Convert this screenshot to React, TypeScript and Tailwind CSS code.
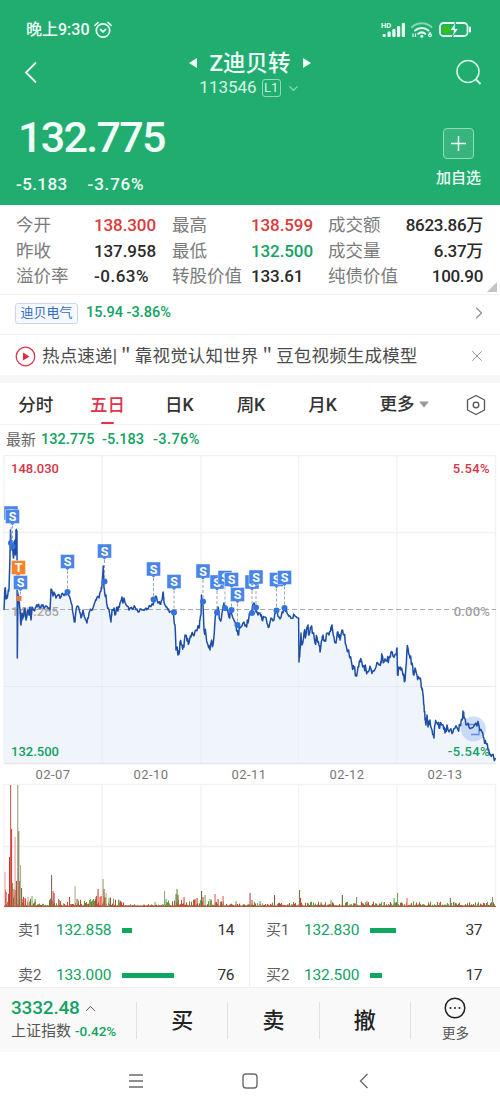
import { ChevronDown, ChevronRight, ChevronUp, X } from 'lucide-react'
import { clsx } from 'clsx'

type Tone = 'up' | 'down' | 'flat'

interface Stat {
  label: string
  value: string
  tone: Tone
}

interface Marker {
  x: number
  flagY: number
  dotY: number
  kind?: 'S' | 'T'
}

const stats: Stat[][] = [
  [
    { label: '今开', value: '138.300', tone: 'up' },
    { label: '最高', value: '138.599', tone: 'up' },
    { label: '成交额', value: '8623.86万', tone: 'flat' },
  ],
  [
    { label: '昨收', value: '137.958', tone: 'flat' },
    { label: '最低', value: '132.500', tone: 'down' },
    { label: '成交量', value: '6.37万', tone: 'flat' },
  ],
  [
    { label: '溢价率', value: '-0.63%', tone: 'flat' },
    { label: '转股价值', value: '133.61', tone: 'flat' },
    { label: '纯债价值', value: '100.90', tone: 'flat' },
  ],
]

const tabs = ['分时', '五日', '日K', '周K', '月K']
const dates = ['02-07', '02-10', '02-11', '02-12', '02-13']

const asks = [
  { label: '卖1', price: '132.858', bar: 10, qty: '14' },
  { label: '卖2', price: '133.000', bar: 52, qty: '76' },
]
const bids = [
  { label: '买1', price: '132.830', bar: 26, qty: '37' },
  { label: '买2', price: '132.500', bar: 12, qty: '17' },
]

// x, y pairs of the price line, y measured from the top of the chart
const pricePoints: [number, number][] = [
  [4, 155], [5, 133], [6, 144], [8, 138], [9, 134], [10, 100], [10.5, 75], [12, 95], [12.5, 88], [13.5, 103],
  [15, 85], [15.5, 100], [16, 75], [17, 76], [17.3, 203], [18, 140], [19, 148], [20, 155], [21, 170], [22, 158],
  [23, 162], [25, 153], [26, 165], [28, 155], [29, 160], [30, 152], [31, 165], [32, 152], [34, 155], [36, 152],
  [38, 150], [40, 153], [42, 151], [45, 152], [48, 153], [50, 155], [51, 134], [53, 141], [54, 137], [56, 143],
  [58, 140], [61, 142], [63, 139], [66, 140], [68, 137], [70, 143], [72, 150], [74, 165], [75, 167], [76, 155],
  [78, 151], [80, 158], [81, 163], [83, 155], [85, 163], [87, 168], [89, 158], [91, 155], [93, 153], [95, 147],
  [97, 142], [99, 143], [101, 136], [102, 130], [103.3, 111], [104, 133], [105, 140], [106, 140], [107, 150],
  [109, 155], [111, 167], [112, 155], [114, 153], [115, 160], [117, 152], [118, 156], [120, 148], [122, 142],
  [123, 148], [124, 143], [127, 151], [129, 155], [131, 153], [133, 154], [135, 152], [138, 157], [140, 154],
  [143, 155], [146, 153], [148, 154], [150, 151], [153, 150], [154, 147], [156, 141], [158, 148], [160, 149],
  [162, 145], [163, 137], [164, 147], [166, 152], [168, 155], [170, 157], [173, 157], [175, 170], [176, 195],
  [177, 192], [178, 200], [179, 199], [180, 187], [182, 190], [184, 192], [185, 180], [187, 186], [189, 188],
  [191, 182], [193, 180], [196, 175], [199, 173], [200, 165], [201, 160], [201.5, 140], [203, 150], [204, 175],
  [206, 180], [208, 190], [210, 195], [211, 188], [213, 190], [215, 165], [216, 158], [218, 152], [220, 165],
  [222, 158], [224, 148], [226, 155], [229, 162], [231, 155], [233, 163], [236, 170], [238, 180], [240, 173],
  [243, 168], [246, 170], [248, 168], [250, 158], [252, 155], [254, 148], [256, 157], [258, 160], [260, 158],
  [262, 165], [264, 162], [267, 168], [269, 172], [271, 163], [274, 165], [276, 155], [279, 162], [282, 157],
  [285, 155], [287, 158], [290, 161], [293, 163], [295, 161], [298.6, 163], [299, 207], [300, 195], [301, 178],
  [302, 190], [304, 178], [306, 180], [308, 170], [309, 180], [311, 172], [313, 178], [315, 188], [317, 182],
  [319, 190], [320, 197], [322, 185], [323, 180], [325, 185], [327, 178], [329, 180], [331, 172], [332, 170],
  [334, 182], [336, 188], [338, 177], [340, 185], [342, 175], [344, 180], [346, 190], [348, 195], [350, 203],
  [352, 210], [354, 213], [356, 220], [358, 212], [360, 207], [362, 208], [364, 211], [366, 214], [368, 217],
  [371, 214], [374, 216], [376, 212], [379, 210], [381, 206], [382, 200], [384, 207], [387, 206], [389, 203],
  [391, 197], [393, 201], [396, 199], [397, 193], [397.5, 220], [399, 213], [401, 215], [403, 220], [405, 226],
  [407, 195], [408, 193], [410, 203], [412, 208], [414, 220], [415, 213], [417, 220], [419, 223], [421, 228],
  [422, 235], [423, 240], [424, 250], [425, 265], [426, 270], [427, 260], [428, 272], [430, 265], [432, 275],
  [434, 283], [435, 270], [437, 268], [439, 273], [441, 268], [443, 270], [445, 278], [447, 270], [450, 275],
  [453, 277], [455, 273], [458, 275], [460, 270], [462, 265], [463, 256], [464, 263], [466, 270], [469, 272],
  [472, 273], [476, 268], [479, 271], [482, 277], [484, 284], [486, 288], [488, 295], [490, 300], [492, 300],
  [495.5, 303],
]

const markers: Marker[] = [
  { x: 11, flagY: 58, dotY: 88 },
  { x: 12.5, flagY: 61.5, dotY: 91.5 },
  { x: 18.5, flagY: 112.5, dotY: 143, kind: 'T' },
  { x: 20.5, flagY: 127.5, dotY: 143 },
  { x: 67.5, flagY: 106.5, dotY: 137 },
  { x: 104.5, flagY: 96, dotY: 126.5 },
  { x: 153.5, flagY: 114, dotY: 144.5 },
  { x: 174, flagY: 126.5, dotY: 157.5 },
  { x: 203, flagY: 116, dotY: 146.5 },
  { x: 217, flagY: 127, dotY: 157.5 },
  { x: 225, flagY: 122.5, dotY: 153 },
  { x: 231.5, flagY: 124.5, dotY: 155 },
  { x: 237.5, flagY: 139.5, dotY: 170 },
  { x: 252, flagY: 127, dotY: 158 },
  { x: 256, flagY: 122, dotY: 152.5 },
  { x: 276.5, flagY: 124.5, dotY: 155.5 },
  { x: 284.5, flagY: 122.5, dotY: 153 },
]

// [x, height, colour] of the bars that stand out above the noise
const volumeSpikes: [number, number, string][] = [
  [5, 35, '#f3a0a0'], [6, 15, '#d8403a'], [9.5, 50, '#c2362f'], [10.5, 122, '#e0605a'], [11.5, 78, '#d8403a'],
  [12.5, 24, '#7d9a3c'], [14, 18, '#d8403a'], [15, 70, '#e99a98'], [16.5, 26, '#b5523a'], [17.7, 122, '#93a083'],
  [18.7, 76, '#8b7a4a'], [19.7, 26, '#c2483a'], [20.5, 42, '#a9b48c'], [21.5, 19, '#7d7a3c'], [23, 8, '#d8403a'],
  [25, 9, '#d8403a'], [28, 10, '#e99a98'], [32, 11, '#7fb069'], [35, 8, '#6fa552'], [51.5, 32, '#8a6a5a'],
  [53, 16, '#e0605a'], [54, 14, '#c2362f'], [59, 7, '#d8403a'], [69.5, 10, '#d8403a'], [75, 21, '#9ab48a'],
  [77, 8, '#d8403a'], [96, 10, '#c2483a'], [98, 18, '#c2483a'], [100, 10, '#ff3b30'], [101, 11, '#ff3b30'],
  [103, 28, '#9aa86a'], [104, 18, '#c2483a'], [106, 14, '#8fbf7a'], [109, 9, '#6fa552'], [119, 7, '#6fa552'],
  [155, 5, '#6fa552'], [164.5, 16, '#8fa87a'], [166, 8, '#6fa552'], [176, 13, '#4b8f2e'], [177, 18, '#4b8f2e'],
  [178, 12, '#d8403a'], [184, 10, '#d8403a'], [195, 8, '#d8403a'], [197, 9, '#c2483a'], [201.5, 16, '#5d6f3a'],
  [203, 10, '#d8403a'], [205, 12, '#6fa552'], [210, 8, '#6fa552'], [215, 13, '#e0605a'], [218, 8, '#d8403a'],
  [223, 11, '#e0605a'], [236, 6, '#6fa552'], [250, 14, '#b5523a'], [252, 7, '#d8403a'], [260, 6, '#6fa552'],
  [274.5, 12, '#7d5a4a'], [299.5, 17, '#7d7a3c'], [300.5, 9, '#d8403a'], [321, 5, '#6fa552'], [331, 7, '#6fa552'],
  [342.3, 12, '#4b6f2e'], [356.5, 10, '#7d9a6c'], [367, 6, '#e0605a'], [384, 5, '#6fa552'], [394, 9, '#6fa552'],
  [397.5, 14, '#6fa552'], [407, 9, '#ff6a5a'], [450.3, 9, '#8a6a5a'], [454, 5, '#6fa552'], [492.5, 10, '#7d9a6c'],
]

const GRID_X = [4, 102, 201, 298.5, 397, 495.5]
const barColors = ['#d8403a', '#c2483a', '#5d9a3c', '#8a6a3a', '#6fa552']

function noise(seed: number) {
  const n = Math.sin(seed * 127.1 + 11.7) * 43758.5453
  return n - Math.floor(n)
}

// add small ticks between the points so the line looks like minute data
function buildLine() {
  const out: string[] = []
  pricePoints.forEach(([x, y], i) => {
    out.push(`${x},${y}`)
    const next = pricePoints[i + 1]
    if (next && next[0] - x >= 1) {
      const amp = x > 23 && x < 172 ? 2 : 4
      for (const t of [0.33, 0.67]) {
        const jitter = (noise(x + t) - 0.5) * 2 * amp
        out.push(`${(x + (next[0] - x) * t).toFixed(2)},${(y + (next[1] - y) * t + jitter).toFixed(2)}`)
      }
    }
  })
  return out.join(' ')
}

function volumeBase(x: number) {
  if (x < 24) return 16
  if (x < 60) return 7
  if (x > 88 && x < 112) return 10
  if (x < 125) return 7
  if (x < 162) return 1.6
  if (x < 225) return 6
  if (x < 250) return 2
  return 4
}

const line = buildLine()

const volumeBars = Array.from({ length: 491 }, (_, i) => {
  const x = 4 + i
  const r = noise(i + 3)
  return { x, h: 1.5 + r * r * volumeBase(x), color: barColors[Math.floor(noise(i * 2 + 1) * barColors.length)] }
})

function toneClass(tone: Tone) {
  return clsx(tone === 'up' && 'text-[#dc3a3c]', tone === 'down' && 'text-[#12a263]', tone === 'flat' && 'text-[#2a2a2a]')
}

function StatusIcons() {
  return (
    <svg width="92" height="20" viewBox="0 0 92 20" fill="none" className="text-[#e9fff4]">
      <text x="1" y="7.5" fontSize="7.500" fontWeight="700" fill="currentColor">HD</text>
      <g fill="currentColor">
        <rect x="2.500" y="14" width="3.200" height="3" rx="1" />
        <rect x="7.500" y="11.5" width="3.200" height="5.5" rx="1" />
        <rect x="12.300" y="9" width="3.200" height="8" rx="1" />
        <rect x="17" y="6" width="3.200" height="11" rx="1" />
        <rect x="21.800" y="3" width="3.200" height="14" rx="1" />
      </g>
      <g stroke="currentColor" strokeLinecap="round">
        <path d="M32 7a14.500 14.500 0 0 1 19.500 0" strokeWidth="2" opacity=".5" />
        <path d="M35 10.500a10 10 0 0 1 13.500 0" strokeWidth="2" />
        <path d="M38.300 13.800a5.500 5.500 0 0 1 7 0" strokeWidth="2" />
      </g>
      <circle cx="41.800" cy="16.200" r="1.500" fill="currentColor" />
      <path d="M33 17v-3.500M35.500 13.500V17" stroke="currentColor" strokeWidth="1.200" />
      <circle cx="50" cy="15.300" r="1.400" stroke="currentColor" strokeWidth="1.200" />
      <path d="M49 15l1.400-3" stroke="currentColor" strokeWidth="1.200" />
      <rect x="60" y="3" width="27.500" height="13" rx="3.500" stroke="currentColor" strokeWidth="1.800" />
      <rect x="62.500" y="5.500" width="8" height="8" rx="1.500" fill="#35c216" />
      <path d="M75.500 2l-5.500 8.500h3.500l-1 6.500 6-8.500H75z" fill="currentColor" stroke="#22ad70" strokeWidth=".8" />
      <path d="M90 7.500v4" stroke="currentColor" strokeWidth="2" strokeLinecap="round" />
    </svg>
  )
}

function AlarmIcon() {
  return (
    <svg width="18" height="18" viewBox="0 0 18 18" fill="none" stroke="#e9fff4" strokeWidth="1.700" strokeLinecap="round">
      <circle cx="9" cy="9.500" r="6.700" />
      <path d="M6.500 8.500L9 10.800l2.600-2.300M1 4.300L4 1.500M17 4.300l-3-2.800" />
    </svg>
  )
}

function Header() {
  return (
    <header className="h-[205px] bg-[#22ad70] text-[#f0fff8]">
      <div className="flex h-[42px] items-end justify-between pr-[28px] pl-[26px]">
        <div className="mb-[2px] flex items-center gap-1 text-[16px] leading-5 font-medium">
          <span>晚上9:30</span>
          <AlarmIcon />
        </div>
        <div className="mb-[2px]"><StatusIcons /></div>
      </div>

      <div className="flex h-[62px] justify-between">
        <svg width="60" height="60" fill="none" stroke="currentColor" strokeWidth="1.800">
          <path d="M36 20.500L26 30.500L36 40.500" />
        </svg>
        <div className="flex flex-col items-center pt-[7px]">
          <div className="flex h-7 items-center gap-[12px]">
            <svg width="8" height="12"><path d="M8 1v10L0 6z" fill="currentColor" /></svg>
            <span className="text-[22.500px] leading-7 font-medium">Z迪贝转</span>
            <svg width="8" height="12"><path d="M0 1v10l8-5z" fill="currentColor" /></svg>
          </div>
          <div className="flex h-[22px] items-center text-[#d4f5e5]">
            <span className="text-[17px]">113546</span>
            <span className="ml-[5px] flex h-[18px] w-[19px] items-center justify-center rounded-[3px] border border-[#8fdcb8] text-[13px]">L1</span>
            <ChevronDown size={15} strokeWidth={1.800} className="ml-[5px] text-[#8fdcb8]" />
          </div>
        </div>
        <svg width="60" height="60" fill="none" stroke="#dcf8ea" strokeWidth="1.500">
          <circle cx="28" cy="29.500" r="11" />
          <path d="M36 37.500l4.500 4.500" strokeWidth="2" />
        </svg>
      </div>

      <div className="flex justify-between pr-[19px] pl-[16px]">
        <div>
          <div className="mt-[8px] pl-[2px] text-[43px] leading-[50px] font-medium tracking-[-1.700px]">132.775</div>
          <div className="mt-[11px] flex gap-[20px] text-[17px] leading-[22px] font-medium tracking-[0.400px]">
            <span>-5.183</span>
            <span className="tracking-[0.800px]">-3.76%</span>
          </div>
        </div>
        <div className="flex flex-col items-center pt-[24px]">
          <svg width="31" height="31" fill="none" stroke="currentColor">
            <rect x=".5" y=".5" width="30" height="30" rx="3.500" fill="#fff" fillOpacity=".1" stroke="#8fdcb8" />
            <path d="M8 15.500h15M15.500 8v15" strokeWidth="1.500" />
          </svg>
          <span className="mt-[8px] text-[15px] leading-[22px] font-medium">加自选</span>
        </div>
      </div>
    </header>
  )
}

function StatsPanel() {
  return (
    <section className="flex h-[90px] justify-between border-b border-[#f3f3f3] pt-[8px] pl-[16px]">
      <div className="w-[467px]">
        {stats.map((row) => (
          <div key={row[0].label} className="grid h-[25.500px] grid-cols-[78px_78px_79px_77px_auto_1fr] items-center text-[17.500px] leading-[25px]">
            {row.map((s, i) => (
              <div key={s.label} className="contents">
                <span className="whitespace-nowrap text-[#7b7b7b]">{s.label}</span>
                <span
                  className={clsx(
                    'text-[17px] font-medium whitespace-nowrap',
                    i === 2 ? 'text-right tracking-[-0.300px]' : 'tracking-[-0.100px]',
                    s.value.endsWith('%') && 'tracking-[0.500px]',
                    toneClass(s.tone)
                  )}
                >
                  {s.value}
                </span>
              </div>
            ))}
          </div>
        ))}
      </div>
      <svg width="11" height="10" className="mr-[2px] mb-[2px] self-end"><path d="M10 0v10H0z" fill="#c4c4c4" /></svg>
    </section>
  )
}

function RelatedStock() {
  return (
    <section className="flex h-[40px] items-center border-b border-[#f3f3f3] pr-[11px] pb-[3px] pl-[15px]">
      <span className="flex h-[21px] w-[63px] items-center justify-center rounded-[3px] border border-[#c9d6ec] bg-[#f7f9fe] text-[13px] text-[#2f6bc4]">
        迪贝电气
      </span>
      <span className="ml-[8px] text-[14.500px] font-medium text-[#12a263]">15.94 -3.86%</span>
      <ChevronRight size={20} strokeWidth={1.400} className="ml-auto text-[#8f8f8f]" />
    </section>
  )
}

function NewsRow() {
  return (
    <section className="flex h-[40px] items-center pt-[2px] pr-[14px] pl-[15px]">
      <svg width="21" height="21" fill="none">
        <circle cx="10.500" cy="10.500" r="9.300" stroke="#d93a4e" strokeWidth="1.300" />
        <path d="M8 6.500v8l6.500-4z" fill="#e02a3c" />
      </svg>
      <span className="ml-[6px] text-[17.500px] tracking-[0.170px] whitespace-pre text-[#4c4c4c]">热点速递|＂靠视觉认知世界＂豆包视频生成模型</span>
      <X size={18} strokeWidth={1.200} className="ml-auto text-[#8a8a8a]" />
    </section>
  )
}

function TabBar() {
  return (
    <nav className="grid h-[42px] grid-cols-[repeat(5,71.700px)_1fr] border-b border-[#f3f3f3] text-[17.500px] font-medium text-[#333]">
      {tabs.map((tab, i) => (
        <div key={tab} className={clsx('flex flex-col items-center', i === 1 && 'text-[#e0344c]')}>
          <span className="mt-[9px] leading-[26px]">{tab}</span>
          {i === 1 && <span className="mt-[4px] h-[2px] w-[13px] rounded-full bg-[#e0344c]" />}
        </div>
      ))}
      <div className="flex h-[42px] items-center pt-px pr-[13px] pl-[21px]">
        <span>更多</span>
        <svg width="10" height="7" className="ml-[5px]"><path d="M0 .5h10L5 6.500z" fill="#999" /></svg>
        <svg width="22" height="22" fill="none" stroke="#555" strokeWidth="1.300" strokeLinejoin="round" className="ml-auto">
          <path d="M11 1.500L19.500 6v10L11 20.500L2.500 16V6z" />
          <circle cx="11" cy="11" r="2.800" />
        </svg>
      </div>
    </nav>
  )
}

function Flag({ x, flagY, kind = 'S' }: Marker) {
  const fill = kind === 'T' ? '#f5842b' : '#4a86e8'
  return (
    <g>
      <path d={`M${x - 7} ${flagY - 7}h14v14h-5l-2 2l-2-2h-5z`} fill={fill} stroke="#fff" strokeWidth=".4" />
      <text x={x} y={flagY + 4.5} textAnchor="middle" fontSize="12.500" fontWeight="700" fill="#fff">{kind}</text>
    </g>
  )
}

function Chart() {
  return (
    <svg width="500" height="453" viewBox="0 0 500 453" className="block">
      <g stroke="#f2f2f2" strokeWidth="1.300">
        {GRID_X.map((x) => <path key={x} d={`M${x} 0V308M${x} 329V452`} />)}
        <path d="M4 .5H496M4 77.500H496M4 329.500H496M4 391.500H496" />
      </g>
      <polygon points={`4,308 ${line} 495.5,308`} fill="#e6ecf9" fillOpacity=".6" />
      <path d="M4 231.500H496" stroke="#e8ebf3" />
      <path d="M4 308.500H496" stroke="#e6e8ee" strokeWidth="1.500" />

      <g fontSize="13" fontWeight="500">
        <text x="11" y="160.500" fill="#a9a9a9">140.265</text>
        <text x="490" y="160.500" textAnchor="end" letterSpacing=".2" fill="#a0a0a0">0.00%</text>
        <path d="M4 154.500H496" stroke="#a9a9a9" strokeDasharray="5 3" />
        <text x="11" y="18" fill="#d93446">148.030</text>
        <text x="490" y="18" textAnchor="end" letterSpacing=".4" fill="#d93446">5.54%</text>
        <text x="11" y="301" fill="#12a263">132.500</text>
        <text x="490" y="301" textAnchor="end" letterSpacing=".4" fill="#12a263">-5.54%</text>
      </g>

      <circle cx="473.500" cy="274" r="12.500" fill="#a9c4f3" fillOpacity=".55" />
      <path d="M468 269.500h11M471 279.500h8v-6" fill="none" stroke="#5b90e6" strokeWidth="1.300" />
      <polyline points={line} fill="none" stroke="#1d4fa6" strokeWidth="1.500" strokeLinejoin="round" />

      {markers.map((m) => (
        <g key={m.x}>
          <path d={`M${m.x} ${m.flagY + 9}V${m.dotY}`} stroke="#8d9bb5" strokeWidth=".9" strokeDasharray="3 2" />
          {m.kind === 'T'
            ? <rect x={m.x - 2} y={m.dotY - 2} width="5" height="5" fill="#ee7a3a" />
            : m.x !== 20.5 && <circle cx={m.x} cy={m.dotY} r="3" fill="#3272dc" />}
        </g>
      ))}
      {markers.map((m) => <Flag key={m.x} {...m} />)}

      {dates.map((d, i) => (
        <text key={d} x={53 + i * 98} y="324" textAnchor="middle" fontSize="13" letterSpacing=".4" fill="#777">{d}</text>
      ))}

      {volumeBars.map((b) => <rect key={b.x} x={b.x} y={452 - b.h} width="1" height={b.h} fill={b.color} />)}
      {volumeSpikes.map(([x, h, color]) => <rect key={x} x={x - 0.5} y={452 - h} width="1.100" height={h} fill={color} />)}
      <path d="M4 451.500H496" stroke="#b5523a" strokeWidth="1" />
    </svg>
  )
}

function BookSide({ rows, className }: { rows: typeof asks; className?: string }) {
  return (
    <div className={clsx('flex flex-col', className)}>
      {rows.map((r) => (
        <div key={r.label} className="flex h-[45px] shrink-0 items-center text-[15.500px] text-[#333]">
          <span className="w-[38px] text-[15px] text-[#5f5f5f]">{r.label}</span>
          <span className="w-[66px] tracking-[-0.150px] text-[#12a263]">{r.price}</span>
          <span className="h-[5px] bg-[#0fa65f]" style={{ width: r.bar }} />
          <span className="ml-auto tracking-[-0.500px]">{r.qty}</span>
        </div>
      ))}
    </div>
  )
}

function OrderBook() {
  return (
    <section className="grid h-[79px] grid-cols-2 overflow-hidden">
      <BookSide rows={asks} className="border-r border-[#f0f0f0] pr-[15px] pl-[18px]" />
      <BookSide rows={bids} className="pr-[18px] pl-[16px]" />
    </section>
  )
}

function ActionBar() {
  return (
    <footer className="flex h-[65px] items-center border-t border-[#efefef] bg-[#f9f9f9]">
      <div className="w-[136px] pb-[2px] pl-[11px]">
        <div className="flex h-[25px] items-center text-[19px] font-medium tracking-[-0.200px] text-[#12a263]">
          3332.48
          <ChevronUp size={17} strokeWidth={1.400} className="ml-[2px] text-[#555]" />
        </div>
        <div className="flex h-[22px] items-center gap-[4px] text-[15px] whitespace-nowrap text-[#555]">
          上证指数
          <span className="text-[13.500px] font-medium text-[#12a263]">-0.42%</span>
        </div>
      </div>
      {['买', '卖', '撤'].map((action) => (
        <div key={action} className="flex h-[37px] w-[91.300px] items-center justify-center border-l border-[#e0e0e0] text-[22px] font-medium text-[#222]">
          {action}
        </div>
      ))}
      <div className="flex h-[37px] flex-1 flex-col items-center justify-center border-l border-[#e0e0e0]">
        <svg width="22" height="22" fill="none" className="shrink-0">
          <circle cx="11" cy="11" r="9.800" stroke="#222" strokeWidth="1.500" />
          <g fill="#222">
            <circle cx="6.500" cy="11" r="1" />
            <circle cx="11" cy="11" r="1" />
            <circle cx="15.500" cy="11" r="1" />
          </g>
        </svg>
        <span className="mt-[4px] text-[13.500px] leading-[20px] text-[#555]">更多</span>
      </div>
    </footer>
  )
}

function SystemNav() {
  return (
    <div className="flex h-[58px] items-center justify-center gap-[98px] text-[#6b6b6b]">
      <svg width="16" height="16" stroke="currentColor" strokeWidth="1.300"><path d="M1 2h14M1 8h14M1 14h14" /></svg>
      <svg width="16" height="16" fill="none" stroke="currentColor" strokeWidth="1.400"><rect x="1" y="1" width="14" height="14" rx="3" /></svg>
      <svg width="16" height="16" fill="none" stroke="currentColor" strokeWidth="1.400"><path d="M11.500 1L4.500 8l7 7" /></svg>
    </div>
  )
}

export default function App() {
  return (
    <div className="h-[1111px] w-[500px] overflow-hidden bg-white font-[Roboto,'Noto_Sans_CJK_SC',sans-serif]">
      <Header />
      <StatsPanel />
      <RelatedStock />
      <NewsRow />
      <div className="h-[8px] bg-[#f7f7f7]" />
      <TabBar />
      <div className="flex h-[30px] items-center pl-[6px] text-[14.500px] font-medium text-[#12a263]">
        <span className="text-[15px] font-normal text-[#666]">最新</span>
        <span className="ml-[5px] w-[61px]">132.775</span>
        <span className="w-[51px]">-5.183</span>
        <span className="tracking-[0.400px]">-3.76%</span>
      </div>
      <Chart />
      <OrderBook />
      <ActionBar />
      <SystemNav />
    </div>
  )
}
